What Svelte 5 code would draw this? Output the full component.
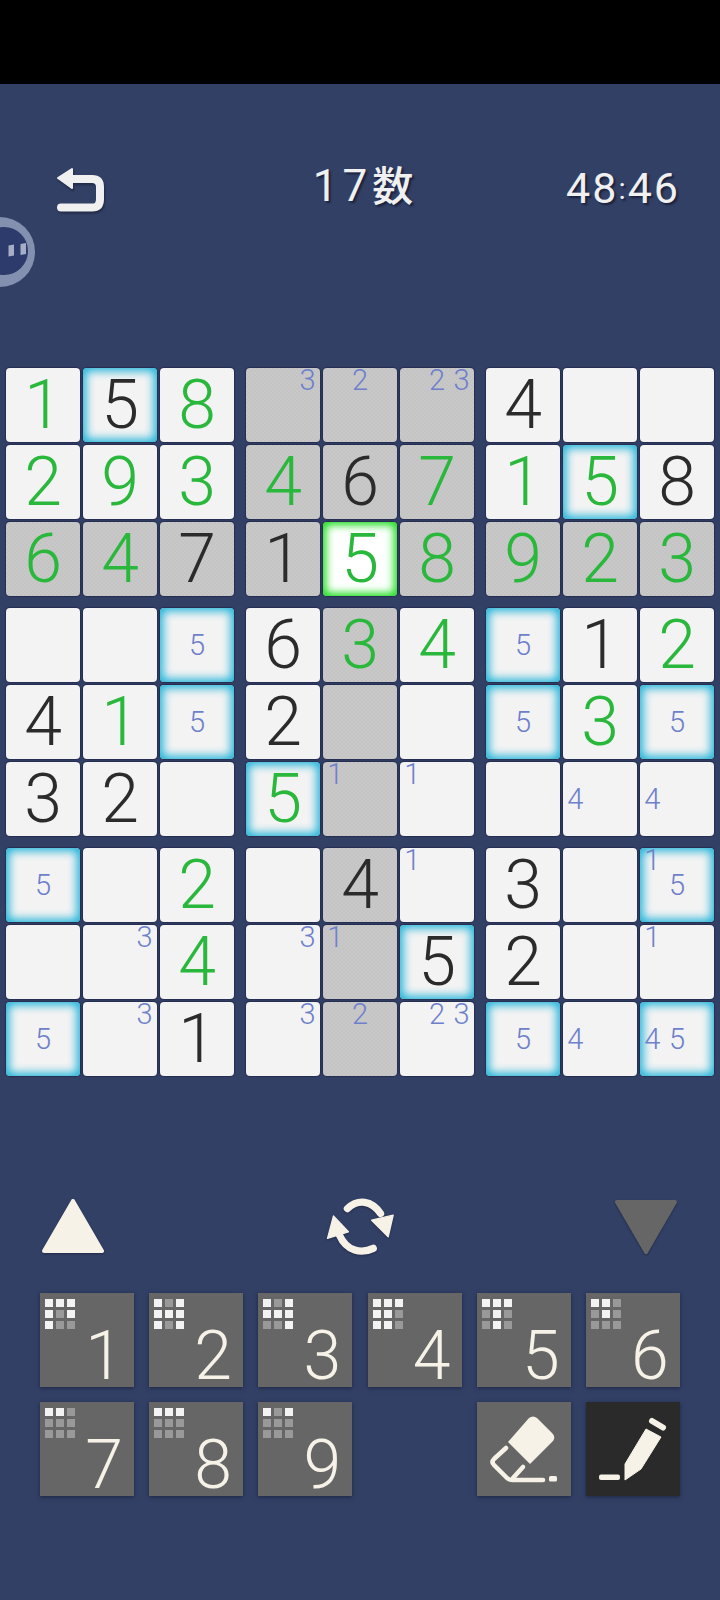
<script>
  const raw = [
    ['g1','k5*','g8','n3','n2','n23','k4','',''],
    ['g2','g9','g3','g4','k6','g7','g1','g5*','k8'],
    ['g6','g4','k7','k1','g5!','g8','g9','g2','g3'],
    ['','','n5*','k6','g3','g4','n5*','k1','g2'],
    ['k4','g1','n5*','k2','','','n5*','g3','n5*'],
    ['k3','k2','','g5*','n1','n1','','n4','n4'],
    ['n5*','','g2','','k4','n1','k3','','n15*'],
    ['','n3','g4','n3','n1','k5*','k2','','n1'],
    ['n5*','n3','k1','n3','n2','n23','n5*','n4','n45*']
  ];

  const isGray = (r, c) => r === 2 || c === 4 || (r < 2 && c >= 3 && c <= 5);

  const parse = (s, r, c) => {
    const kind = s[0] || '';
    const glow = s.endsWith('*');
    const sel = s.endsWith('!');
    const body = s.slice(1).replace(/[*!]/, '');
    return {
      key: `${r}-${c}`,
      kind,
      body,
      glow,
      sel,
      gray: isGray(r, c),
      notes: kind === 'n' ? body.split('').map(Number) : []
    };
  };

  const rows = raw.map((row, r) => row.map((s, c) => parse(s, r, c)));
  const blocks = [0, 3, 6].flatMap((r) =>
    [0, 3, 6].map((c) => rows.slice(r, r + 3).flatMap((row) => row.slice(c, c + 3)))
  );

  const pads = [
    { n: 1, dots: '111101100' },
    { n: 2, dots: '101111101' },
    { n: 3, dots: '101111001' },
    { n: 4, dots: '111110110' },
    { n: 5, dots: '111010010' },
    { n: 6, dots: '110010000' },
    { n: 7, dots: '110000000' },
    { n: 8, dots: '111000000' },
    { n: 9, dots: '101000000' }
  ];
</script>

<div class="screen">
  <div class="status"></div>

  <header class="top">
    <svg class="back" viewBox="0 0 50 46" aria-label="back">
      <path d="M2 11 L16 2 L16 21 Z" fill="#f0f0f0" stroke="#f0f0f0" stroke-width="2" stroke-linejoin="round" />
      <path d="M14 12 H36 Q44 12 44 20 V32 Q44 40.5 36 40.5 H5" fill="none" stroke="#f0f0f0" stroke-width="8" stroke-linecap="round" />
    </svg>
    <div class="title">17<span class="kanji">数</span></div>
    <div class="timer">48<span class="colon">:</span>46</div>
  </header>

  <svg class="pause" viewBox="0 0 36 72" aria-label="pause">
    <circle cx="0" cy="36" r="35" fill="#8390b0" />
    <circle cx="4" cy="35" r="24" fill="#2c3b6b" />
    <path d="M8.5 29.5 L14 28.5 V39.5 L8.5 40.5 Z" fill="#a5aec6" />
    <path d="M20.5 28 L26 27 V38 L20.5 39 Z" fill="#a5aec6" />
  </svg>

  <main class="board">
    {#each blocks as block}
      <div class="block">
        {#each block as cell (cell.key)}
          <div class="cell" class:gray={cell.gray} class:glow={cell.glow} class:sel={cell.sel}>
            {#if cell.kind === 'n'}
              {#each cell.notes as n}
                <span class="note" style="grid-column:{(n - 1) % 3 + 1};grid-row:{Math.floor((n - 1) / 3) + 1}">{n}</span>
              {/each}
            {:else if cell.kind}
              <span class="val" class:green={cell.kind === 'g'}>{cell.body}</span>
            {/if}
          </div>
        {/each}
      </div>
    {/each}
  </main>

  <section class="controls">
    <svg class="tri" viewBox="0 0 64 57"><path d="M32 3 L61 53 H3 Z" fill="#f6f2e8" stroke="#f6f2e8" stroke-width="4" stroke-linejoin="round" /></svg>
    <svg class="sync" viewBox="975 80 210 175">
      <path d="M1042 115 C1075 85 1115 90 1142 130" fill="none" stroke="#f6f2e8" stroke-width="22" stroke-linecap="round" />
      <path d="M1115 150 L1180 135 L1165 200 Z" fill="#f6f2e8" stroke="#f6f2e8" stroke-width="4" stroke-linejoin="round" />
      <path d="M1120 235 C1085 252 1040 245 1018 195" fill="none" stroke="#f6f2e8" stroke-width="22" stroke-linecap="round" />
      <path d="M982 205 L1000 137 L1045 185 Z" fill="#f6f2e8" stroke="#f6f2e8" stroke-width="4" stroke-linejoin="round" />
    </svg>
    <svg class="tri" viewBox="0 0 64 57"><path d="M3 4 H61 L32 54 Z" fill="#666" stroke="#666" stroke-width="4" stroke-linejoin="round" /></svg>
  </section>

  <section class="pad">
    {#each pads as p}
      <button class="key">
        <span class="dots">
          {#each p.dots.split('') as d}
            <i class:on={d === '1'}></i>
          {/each}
        </span>
        <span class="num">{p.n}</span>
      </button>
    {/each}
    <span class="spacer"></span>
    <button class="key" aria-label="eraser">
      <svg viewBox="0 0 94 94">
        <path d="M52 16 Q56 13 60 16 L75 31 Q79 35 76 39 L53 62 L31 40 Z" fill="#f6f2e8" />
        <path d="M29 46 L17 57 Q14 60 17 63 L30 76 Q32 78 36 78 H66" fill="none" stroke="#f6f2e8" stroke-width="4.5" stroke-linecap="round" stroke-linejoin="round" />
        <path d="M46 65 L36 76" fill="none" stroke="#f6f2e8" stroke-width="4.5" stroke-linecap="round" />
        <rect x="72" y="74" width="8" height="5.5" rx="1.5" fill="#f6f2e8" />
      </svg>
    </button>
    <button class="key dark" aria-label="pencil">
      <svg viewBox="0 0 94 94">
        <rect x="13" y="72.5" width="21" height="5.5" rx="2" fill="#f6f2e8" />
        <path d="M39 78 V62 L60 27 L75 35 L55 67 Z" fill="#f6f2e8" stroke="#f6f2e8" stroke-width="1" stroke-linejoin="round" />
        <path d="M66 19 L77 25.5" fill="none" stroke="#f6f2e8" stroke-width="6" stroke-linecap="round" />
      </svg>
    </button>
  </section>
</div>

<style>
  :global(body) {
    margin: 0;
    background: #334066;
  }

  .screen {
    width: 720px;
    height: 1600px;
    position: relative;
    overflow: hidden;
    background: #334066;
    font-family: "Roboto", "Noto Sans CJK JP", sans-serif;
  }

  .status {
    height: 84px;
    background: #000;
  }

  .top {
    display: grid;
    grid-template-columns: 1fr auto 1fr;
    align-items: center;
    height: 46px;
    margin-top: 83px;
    padding: 0 40px 0 56px;
    color: #f0f0f0;
    text-shadow: 2px 2px 2px rgba(20, 26, 50, 0.8);
  }

  .back {
    width: 50px;
    height: 46px;
    filter: drop-shadow(1px 2px 1px rgba(20, 26, 50, 0.6));
  }

  .title {
    font-size: 44px;
    font-weight: 400;
    letter-spacing: 5px;
    line-height: 46px;
    margin: -7px 0 0 -10px;
  }

  .kanji {
    font-size: 41px;
    font-weight: 500;
    letter-spacing: 0;
  }

  .timer {
    justify-self: end;
    font-size: 43px;
    font-weight: 400;
    letter-spacing: 2px;
    line-height: 46px;
    margin-top: -3px;
  }

  .colon {
    font-size: 30px;
    vertical-align: 4px;
  }

  .pause {
    position: absolute;
    left: 0;
    top: 216px;
    width: 36px;
    height: 72px;
  }

  .board {
    display: grid;
    grid-template-columns: repeat(3, 228px);
    gap: 12px;
    margin-top: 155px;
    padding-left: 6px;
  }

  .block {
    display: grid;
    grid-template-columns: repeat(3, 74px);
    grid-auto-rows: 74px;
    gap: 3px;
  }

  .cell {
    box-sizing: border-box;
    position: relative;
    display: grid;
    grid-template-columns: repeat(3, 1fr);
    grid-template-rows: repeat(3, 1fr);
    background: #f3f3f3;
    border-radius: 4px;
    box-shadow: 0 0 1px 1px rgba(28, 34, 64, 0.6);
  }

  .cell.gray {
    background: repeating-conic-gradient(#c4c4c4 0 25%, #c8c8c8 0 50%) 0 0 / 4px 4px;
  }

  .cell.glow {
    box-shadow: 0 0 1px 1px rgba(28, 34, 64, 0.6), inset 0 0 10px 3px #1cb2d8;
  }

  .cell.sel {
    background: #fff;
    box-shadow: 0 0 1px 1px rgba(28, 34, 64, 0.6), inset 0 0 9px 3px #14dc14;
  }

  .val {
    grid-column: 1 / -1;
    grid-row: 1 / -1;
    place-self: center;
    font-size: 68px;
    font-weight: 350;
    line-height: 60px;
    color: #2b2b2b;
  }

  .val.green {
    color: #2ab83c;
  }

  .note {
    place-self: center;
    font-size: 29px;
    font-weight: 300;
    line-height: 24px;
    color: #6e7fcb;
  }

  .controls {
    display: flex;
    justify-content: space-between;
    align-items: center;
    margin-top: 121px;
    padding: 0 42px 0 41px;
    height: 58px;
  }

  .tri {
    width: 64px;
    height: 57px;
    filter: drop-shadow(0 1px 1px rgba(20, 26, 50, 0.6));
  }

  .sync {
    width: 70px;
    height: 58px;
    filter: drop-shadow(0 1px 1px rgba(20, 26, 50, 0.6));
  }

  .pad {
    display: grid;
    grid-template-columns: repeat(6, 94px);
    grid-auto-rows: 94px;
    column-gap: 15.2px;
    row-gap: 15px;
    margin-top: 38px;
    padding-left: 40px;
  }

  .spacer {
    display: block;
  }

  .key {
    position: relative;
    padding: 0;
    border: 0;
    background: #666;
    box-shadow: 0 1px 4px rgba(20, 26, 50, 0.7);
    color: #f6f2e8;
    font-family: inherit;
  }

  .key.dark {
    background: #2a2a2a;
  }

  .key svg {
    display: block;
    width: 94px;
    height: 94px;
  }

  .dots {
    position: absolute;
    left: 5px;
    top: 6px;
    display: grid;
    grid-template-columns: repeat(3, 8px);
    grid-auto-rows: 8px;
    gap: 3px;
  }

  .dots i {
    background: #999;
  }

  .dots i.on {
    background: #f3f3f3;
  }

  .num {
    position: absolute;
    left: 40px;
    top: 33px;
    width: 48px;
    text-align: center;
    font-size: 68px;
    font-weight: 300;
    line-height: 60px;
  }
</style>
